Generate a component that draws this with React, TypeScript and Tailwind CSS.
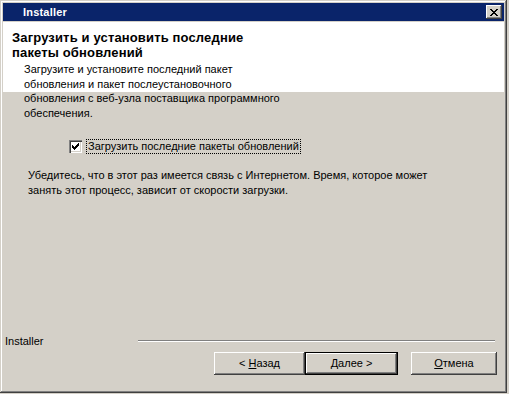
import React from "react";

const font = { fontFamily: '"Liberation Sans", Arial, sans-serif' };

function Btn({ children, isDefault, w }: { children: React.ReactNode; isDefault?: boolean; w: string }) {
  const inner = (
    <div className="h-full w-full bg-[#d4d0c8] shadow-[inset_-1px_-1px_#404040,inset_1px_1px_#ffffff,inset_-2px_-2px_#808080,inset_2px_2px_#d4d0c8] flex items-center justify-center text-[11px] text-black">
      {children}
    </div>
  );
  if (isDefault) {
    return <div className={`${w} h-[23px] border border-black`}>{inner}</div>;
  }
  return <div className={`${w} h-[23px]`}>{inner}</div>;
}

export default function App() {
  return (
    <div className="w-[509px] h-[394px] bg-[#d4d0c8] overflow-hidden" style={font}>
      <div className="w-[507px] h-[393px] p-[3px] flex flex-col bg-[#d4d0c8] shadow-[inset_-1px_-1px_#404040,inset_1px_1px_#d4d0c8,inset_-2px_-2px_#808080,inset_2px_2px_#ffffff]">
        {/* Title bar */}
        <div className="h-[18px] bg-[#0a246a] flex items-center justify-between pl-[20px] pr-[2px]">
          <span className="text-white font-bold text-[11px] leading-none tracking-[0.2px]">Installer</span>
          <div className="w-[16px] h-[14px] bg-[#d4d0c8] shadow-[inset_-1px_-1px_#404040,inset_1px_1px_#ffffff,inset_-2px_-2px_#808080] flex items-center justify-center">
            <svg width="8" height="7" viewBox="0 0 8 7" shapeRendering="crispEdges">
              <path d="M0 0h2v1h-2zM6 0h2v1h-2zM1 1h2v1h-2zM5 1h2v1h-2zM2 2h4v1h-4zM3 3h2v1h-2zM2 4h4v1h-4zM1 5h2v1h-2zM5 5h2v1h-2zM0 6h2v1h-2zM6 6h2v1h-2z" fill="#000" />
            </svg>
          </div>
        </div>
        <div className="h-[1px]" />
        {/* Header */}
        <div className="h-[70px] bg-white pl-[9px] pt-[8px] overflow-visible">
          <div className="text-[13px] font-bold leading-[15px] text-black tracking-[0.15px]">
            <div>Загрузить и установить последние</div>
            <div>пакеты обновлений</div>
          </div>
          <div className="pl-[12px] pt-[2px] text-[11px] leading-[14.5px] text-black">
            <div>Загрузите и установите последний пакет</div>
            <div>обновления и пакет послеустановочного</div>
            <div>обновления с веб-узла поставщика программного</div>
            <div>обеспечения.</div>
          </div>
        </div>
        {/* Body */}
        <div className="flex-1 flex flex-col pt-[47px]">
          <div className="flex items-center pl-[66px] h-[15px]">
            <div className="w-[13px] h-[13px] bg-white shadow-[inset_1px_1px_#808080,inset_2px_2px_#404040,inset_-1px_-1px_#ffffff,inset_-2px_-2px_#d4d0c8] flex items-center justify-center">
              <svg width="7" height="7" viewBox="0 0 7 7" shapeRendering="crispEdges">
                <path d="M6 0h1v3h-1zM5 1h1v3h-1zM4 2h1v3h-1zM3 3h1v3h-1zM2 4h1v3h-1zM1 3h1v3h-1zM0 2h1v3h-1z" fill="#000" />
              </svg>
            </div>
            <div className="ml-[4px] h-[15px] px-[1px] border border-dotted border-black flex items-center text-[11px] text-black">
              Загрузить последние пакеты обновлений
            </div>
          </div>
          <div className="pl-[25px] pt-[14px] text-[11px] leading-[14.5px] text-black">
            <div>Убедитесь, что в этот раз имеется связь с Интернетом. Время, которое может</div>
            <div>занять этот процесс, зависит от скорости загрузки.</div>
          </div>
          <div className="flex-1" />
          {/* Footer */}
          <div className="flex items-center h-[14px] pl-[2px] pr-[9px]">
            <span className="text-[11px] text-black w-[133px]">Installer</span>
            <div className="flex-1 h-[2px] border-t border-[#808080] border-b border-b-white" />
          </div>
          <div className="flex justify-end pr-[7px] pt-[4px] pb-[15px]">
            <Btn w="w-[91px]">
              <span>&lt; <span className="underline">Н</span>азад</span>
            </Btn>
            <Btn w="w-[93px]" isDefault>
              <span><span className="underline">Д</span>алее &gt;</span>
            </Btn>
            <div className="w-[13px]" />
            <Btn w="w-[86px]">
              <span><span className="underline">О</span>тмена</span>
            </Btn>
          </div>
        </div>
      </div>
    </div>
  );
}
